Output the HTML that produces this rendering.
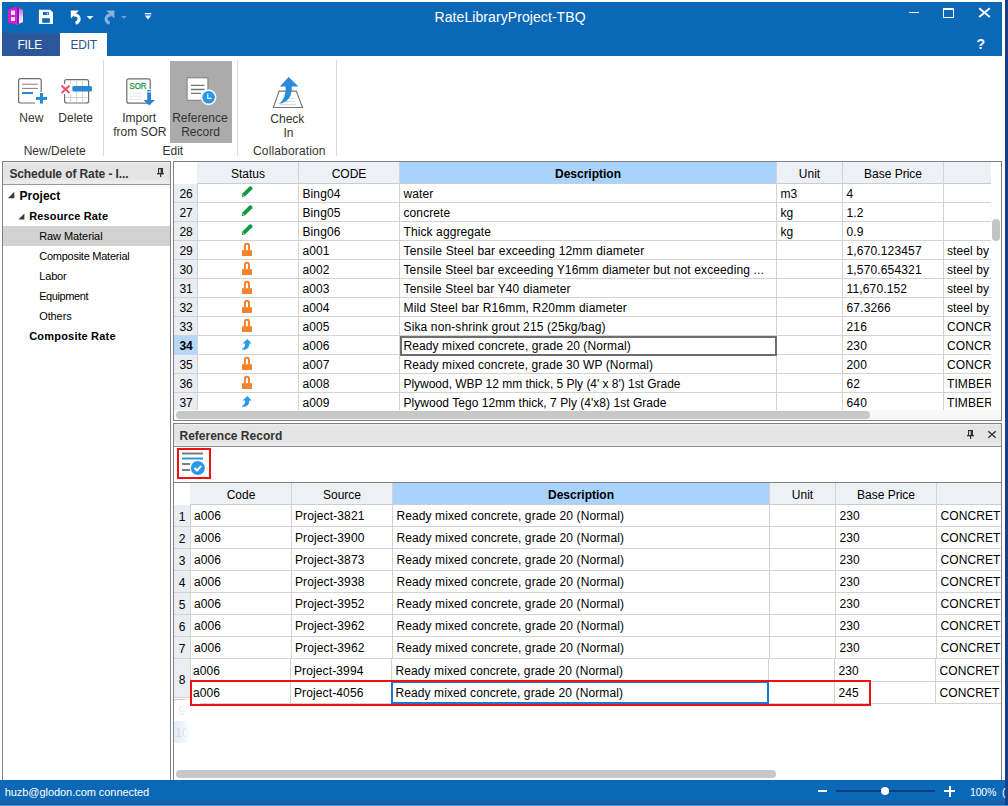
<!DOCTYPE html><html><head><meta charset="utf-8"><style>html,body{margin:0;padding:0;}body{width:1008px;height:806px;position:relative;overflow:hidden;background:#fff;font-family:"Liberation Sans", sans-serif;}div{box-sizing:border-box;}</style></head><body>
<div style="position:absolute;left:1005px;top:0px;width:3px;height:806px;background:#153f86;"></div>
<div style="position:absolute;left:2px;top:2px;width:1000px;height:54px;background:#0b68b6;"></div>
<div style="position:absolute;left:2px;top:33px;width:58px;height:23px;background:#2b579a;"></div>
<div style="position:absolute;left:17.4px;top:38.04px;font-size:12px;line-height:14px;font-weight:normal;color:#fff;letter-spacing:-0.15px;white-space:nowrap;">FILE</div>
<div style="position:absolute;left:60px;top:33px;width:47px;height:24px;background:#fff;"></div>
<div style="position:absolute;left:70.6px;top:38.04px;font-size:12px;line-height:14px;font-weight:normal;color:#2a5699;letter-spacing:-0.3px;white-space:nowrap;">EDIT</div>
<div style="position:absolute;left:434.5px;top:9.45px;font-size:14px;line-height:16px;font-weight:normal;color:#fff;letter-spacing:0.08px;white-space:nowrap;">RateLibraryProject-TBQ</div>
<div style="position:absolute;left:103px;top:60px;width:1px;height:96px;background:#dadada;"></div>
<div style="position:absolute;left:237px;top:60px;width:1px;height:96px;background:#dadada;"></div>
<div style="position:absolute;left:336px;top:60px;width:1px;height:96px;background:#dadada;"></div>
<div style="position:absolute;left:170px;top:61px;width:62px;height:82px;background:#ababab;"></div>
<div style="position:absolute;left:19.3px;top:110.64px;font-size:12px;line-height:14px;font-weight:normal;color:#333;letter-spacing:0px;white-space:nowrap;">New</div>
<div style="position:absolute;left:58.3px;top:110.64px;font-size:12px;line-height:14px;font-weight:normal;color:#333;letter-spacing:0px;white-space:nowrap;">Delete</div>
<div style="position:absolute;left:23.7px;top:143.84px;font-size:12px;line-height:14px;font-weight:normal;color:#333;letter-spacing:0px;white-space:nowrap;">New/Delete</div>
<div style="position:absolute;left:122.2px;top:110.84px;font-size:12px;line-height:14px;font-weight:normal;color:#333;letter-spacing:0px;white-space:nowrap;">Import</div>
<div style="position:absolute;left:113.2px;top:125.34px;font-size:12px;line-height:14px;font-weight:normal;color:#333;letter-spacing:0px;white-space:nowrap;">from SOR</div>
<div style="position:absolute;left:172.2px;top:110.84px;font-size:12px;line-height:14px;font-weight:normal;color:#333;letter-spacing:0px;white-space:nowrap;">Reference</div>
<div style="position:absolute;left:181.2px;top:125.34px;font-size:12px;line-height:14px;font-weight:normal;color:#333;letter-spacing:0px;white-space:nowrap;">Record</div>
<div style="position:absolute;left:162.5px;top:144.04px;font-size:12px;line-height:14px;font-weight:normal;color:#333;letter-spacing:0px;white-space:nowrap;">Edit</div>
<div style="position:absolute;left:270.3px;top:111.54px;font-size:12px;line-height:14px;font-weight:normal;color:#333;letter-spacing:0px;white-space:nowrap;">Check</div>
<div style="position:absolute;left:283.5px;top:126.04px;font-size:12px;line-height:14px;font-weight:normal;color:#333;letter-spacing:0px;white-space:nowrap;">In</div>
<div style="position:absolute;left:253px;top:143.74px;font-size:12px;line-height:14px;font-weight:normal;color:#333;letter-spacing:0.15px;white-space:nowrap;">Collaboration</div>
<div style="position:absolute;left:2px;top:161px;width:169px;height:619px;border:1px solid #808086;border-bottom:none;background:#fff;"></div>
<div style="position:absolute;left:3px;top:162px;width:167px;height:23px;background:linear-gradient(#efefef 0px,#e4e4e4 2px,#e4e4e4 17px,#ebebeb 19px,#ebebeb 22px);border-bottom:1px solid #9a9a9a;"></div>
<div style="position:absolute;left:9.4px;top:167.24px;font-size:12px;line-height:14px;font-weight:bold;color:#333;letter-spacing:-0.1px;white-space:nowrap;">Schedule of Rate - I...</div>
<div style="position:absolute;left:3px;top:226px;width:167px;height:20px;background:#d2d2d2;"></div>
<div style="position:absolute;left:19.6px;top:188.59px;font-size:12px;line-height:14px;font-weight:bold;color:#000;letter-spacing:0px;white-space:nowrap;">Project</div>
<div style="position:absolute;left:29.2px;top:209.89px;font-size:11px;line-height:13px;font-weight:bold;color:#000;letter-spacing:0.15px;white-space:nowrap;">Resource Rate</div>
<div style="position:absolute;left:39.2px;top:230.09px;font-size:11px;line-height:13px;font-weight:normal;color:#000;letter-spacing:-0.07px;white-space:nowrap;">Raw Material</div>
<div style="position:absolute;left:39.2px;top:249.79px;font-size:11px;line-height:13px;font-weight:normal;color:#000;letter-spacing:-0.25px;white-space:nowrap;">Composite Material</div>
<div style="position:absolute;left:39.2px;top:269.79px;font-size:11px;line-height:13px;font-weight:normal;color:#000;letter-spacing:-0.14px;white-space:nowrap;">Labor</div>
<div style="position:absolute;left:39.2px;top:289.59px;font-size:11px;line-height:13px;font-weight:normal;color:#000;letter-spacing:-0.4px;white-space:nowrap;">Equipment</div>
<div style="position:absolute;left:39.2px;top:309.79px;font-size:11px;line-height:13px;font-weight:normal;color:#000;letter-spacing:-0.1px;white-space:nowrap;">Others</div>
<div style="position:absolute;left:29.2px;top:329.69px;font-size:11px;line-height:13px;font-weight:bold;color:#000;letter-spacing:0.2px;white-space:nowrap;">Composite Rate</div>
<div style="position:absolute;left:173px;top:161px;width:829px;height:260px;border:1px solid #808086;background:#fff;"></div>
<div style="position:absolute;left:174px;top:162px;width:817px;height:22px;background:#edf1f6;"></div>
<div style="position:absolute;left:174px;top:162px;width:23px;height:22px;background:#fff;"></div>
<div style="position:absolute;left:400px;top:162px;width:376px;height:21px;background:#a9d3fd;"></div>
<div style="position:absolute;left:197px;top:183px;width:794px;height:1px;background:#c9ced6;"></div>
<div style="position:absolute;left:174px;top:184px;width:23px;height:227px;background:#eaeef3;"></div>
<div style="position:absolute;left:298px;top:162px;width:1px;height:249px;background:#d3d3d3;"></div>
<div style="position:absolute;left:399px;top:162px;width:1px;height:249px;background:#d3d3d3;"></div>
<div style="position:absolute;left:776px;top:162px;width:1px;height:249px;background:#d3d3d3;"></div>
<div style="position:absolute;left:842px;top:162px;width:1px;height:249px;background:#d3d3d3;"></div>
<div style="position:absolute;left:943px;top:162px;width:1px;height:249px;background:#d3d3d3;"></div>
<div style="position:absolute;left:197px;top:183px;width:1px;height:228px;background:#d3d3d3;"></div>
<div style="position:absolute;left:0px;top:-0.85px;font-size:1px;line-height:1px;font-weight:normal;color:#000;letter-spacing:0px;white-space:nowrap;"></div>
<div style="position:absolute;left:198px;width:100px;top:166.74px;font-size:12px;line-height:14px;text-align:center;font-weight:normal;color:#000;white-space:nowrap;">Status</div>
<div style="position:absolute;left:299px;width:100px;top:166.74px;font-size:12px;line-height:14px;text-align:center;font-weight:normal;color:#000;white-space:nowrap;">CODE</div>
<div style="position:absolute;left:400px;width:376px;top:166.74px;font-size:12px;line-height:14px;text-align:center;font-weight:bold;color:#000;white-space:nowrap;">Description</div>
<div style="position:absolute;left:777px;width:65px;top:166.74px;font-size:12px;line-height:14px;text-align:center;font-weight:normal;color:#000;white-space:nowrap;">Unit</div>
<div style="position:absolute;left:843px;width:100px;top:166.74px;font-size:12px;line-height:14px;text-align:center;font-weight:normal;color:#000;white-space:nowrap;">Base Price</div>
<div style="position:absolute;left:174px;top:202px;width:817px;height:1px;background:#d3d3d3;"></div>
<div style="position:absolute;left:174.6px;width:23.0px;top:186.54px;font-size:12px;line-height:14px;text-align:center;font-weight:normal;color:#000;white-space:nowrap;">26</div>
<div style="position:absolute;left:240px;top:184px;width:14px;height:14px;"><svg width="14" height="14" viewBox="0 0 14 14"><path d="M1.9 13 L2.15 9.85 L9.55 2.45 Q10.9 1.8 12.25 3.15 Q12.5 4 12.25 5.15 L4.85 12.55 Z" fill="#129a3e"/><path d="M2.7 10.6 L4.2 12.1" stroke="#e8f8ea" stroke-width="0.9"/></svg></div>
<div style="position:absolute;left:302.5px;top:186.54px;font-size:12px;line-height:14px;font-weight:normal;color:#000;letter-spacing:0.1px;white-space:nowrap;">Bing04</div>
<div style="position:absolute;left:403.5px;top:186.54px;font-size:12px;line-height:14px;font-weight:normal;color:#000;letter-spacing:0.1px;white-space:nowrap;">water</div>
<div style="position:absolute;left:780.5px;top:186.54px;font-size:12px;line-height:14px;font-weight:normal;color:#000;letter-spacing:0px;white-space:nowrap;">m3</div>
<div style="position:absolute;left:846.5px;top:186.54px;font-size:12px;line-height:14px;font-weight:normal;color:#000;letter-spacing:0.15px;white-space:nowrap;">4</div>
<div style="position:absolute;left:174px;top:221px;width:817px;height:1px;background:#d3d3d3;"></div>
<div style="position:absolute;left:174.6px;width:23.0px;top:205.54px;font-size:12px;line-height:14px;text-align:center;font-weight:normal;color:#000;white-space:nowrap;">27</div>
<div style="position:absolute;left:240px;top:203px;width:14px;height:14px;"><svg width="14" height="14" viewBox="0 0 14 14"><path d="M1.9 13 L2.15 9.85 L9.55 2.45 Q10.9 1.8 12.25 3.15 Q12.5 4 12.25 5.15 L4.85 12.55 Z" fill="#129a3e"/><path d="M2.7 10.6 L4.2 12.1" stroke="#e8f8ea" stroke-width="0.9"/></svg></div>
<div style="position:absolute;left:302.5px;top:205.54px;font-size:12px;line-height:14px;font-weight:normal;color:#000;letter-spacing:0.1px;white-space:nowrap;">Bing05</div>
<div style="position:absolute;left:403.5px;top:205.54px;font-size:12px;line-height:14px;font-weight:normal;color:#000;letter-spacing:0.1px;white-space:nowrap;">concrete</div>
<div style="position:absolute;left:780.5px;top:205.54px;font-size:12px;line-height:14px;font-weight:normal;color:#000;letter-spacing:0px;white-space:nowrap;">kg</div>
<div style="position:absolute;left:846.5px;top:205.54px;font-size:12px;line-height:14px;font-weight:normal;color:#000;letter-spacing:0.15px;white-space:nowrap;">1.2</div>
<div style="position:absolute;left:174px;top:240px;width:817px;height:1px;background:#d3d3d3;"></div>
<div style="position:absolute;left:174.6px;width:23.0px;top:224.54px;font-size:12px;line-height:14px;text-align:center;font-weight:normal;color:#000;white-space:nowrap;">28</div>
<div style="position:absolute;left:240px;top:222px;width:14px;height:14px;"><svg width="14" height="14" viewBox="0 0 14 14"><path d="M1.9 13 L2.15 9.85 L9.55 2.45 Q10.9 1.8 12.25 3.15 Q12.5 4 12.25 5.15 L4.85 12.55 Z" fill="#129a3e"/><path d="M2.7 10.6 L4.2 12.1" stroke="#e8f8ea" stroke-width="0.9"/></svg></div>
<div style="position:absolute;left:302.5px;top:224.54px;font-size:12px;line-height:14px;font-weight:normal;color:#000;letter-spacing:0.1px;white-space:nowrap;">Bing06</div>
<div style="position:absolute;left:403.5px;top:224.54px;font-size:12px;line-height:14px;font-weight:normal;color:#000;letter-spacing:0.1px;white-space:nowrap;">Thick aggregate</div>
<div style="position:absolute;left:780.5px;top:224.54px;font-size:12px;line-height:14px;font-weight:normal;color:#000;letter-spacing:0px;white-space:nowrap;">kg</div>
<div style="position:absolute;left:846.5px;top:224.54px;font-size:12px;line-height:14px;font-weight:normal;color:#000;letter-spacing:0.15px;white-space:nowrap;">0.9</div>
<div style="position:absolute;left:174px;top:259px;width:817px;height:1px;background:#d3d3d3;"></div>
<div style="position:absolute;left:174.6px;width:23.0px;top:243.54px;font-size:12px;line-height:14px;text-align:center;font-weight:normal;color:#000;white-space:nowrap;">29</div>
<div style="position:absolute;left:240px;top:242px;width:14px;height:14px;"><svg width="14" height="14" viewBox="0 0 14 14"><path d="M4.9 8.5 V3.8 A2.05 2.05 0 0 1 9 3.8 V8.5" fill="none" stroke="#f5832c" stroke-width="2"/><rect x="2" y="8.2" width="10" height="5.8" fill="#f5832c"/></svg></div>
<div style="position:absolute;left:302.5px;top:243.54px;font-size:12px;line-height:14px;font-weight:normal;color:#000;letter-spacing:0.1px;white-space:nowrap;">a001</div>
<div style="position:absolute;left:403.5px;top:243.54px;font-size:12px;line-height:14px;font-weight:normal;color:#000;letter-spacing:0.18px;white-space:nowrap;">Tensile Steel bar exceeding 12mm diameter</div>
<div style="position:absolute;left:846.5px;top:243.54px;font-size:12px;line-height:14px;font-weight:normal;color:#000;letter-spacing:0.15px;white-space:nowrap;">1,670.123457</div>
<div style="position:absolute;left:947px;top:243.54px;font-size:12px;line-height:14px;font-weight:normal;color:#000;letter-spacing:0.1px;white-space:nowrap;">steel by</div>
<div style="position:absolute;left:174px;top:278px;width:817px;height:1px;background:#d3d3d3;"></div>
<div style="position:absolute;left:174.6px;width:23.0px;top:262.54px;font-size:12px;line-height:14px;text-align:center;font-weight:normal;color:#000;white-space:nowrap;">30</div>
<div style="position:absolute;left:240px;top:261px;width:14px;height:14px;"><svg width="14" height="14" viewBox="0 0 14 14"><path d="M4.9 8.5 V3.8 A2.05 2.05 0 0 1 9 3.8 V8.5" fill="none" stroke="#f5832c" stroke-width="2"/><rect x="2" y="8.2" width="10" height="5.8" fill="#f5832c"/></svg></div>
<div style="position:absolute;left:302.5px;top:262.54px;font-size:12px;line-height:14px;font-weight:normal;color:#000;letter-spacing:0.1px;white-space:nowrap;">a002</div>
<div style="position:absolute;left:403.5px;top:262.54px;font-size:12px;line-height:14px;font-weight:normal;color:#000;letter-spacing:0.12px;white-space:nowrap;">Tensile Steel bar exceeding Y16mm diameter but not exceeding ...</div>
<div style="position:absolute;left:846.5px;top:262.54px;font-size:12px;line-height:14px;font-weight:normal;color:#000;letter-spacing:0.15px;white-space:nowrap;">1,570.654321</div>
<div style="position:absolute;left:947px;top:262.54px;font-size:12px;line-height:14px;font-weight:normal;color:#000;letter-spacing:0.1px;white-space:nowrap;">steel by</div>
<div style="position:absolute;left:174px;top:297px;width:817px;height:1px;background:#d3d3d3;"></div>
<div style="position:absolute;left:174.6px;width:23.0px;top:281.54px;font-size:12px;line-height:14px;text-align:center;font-weight:normal;color:#000;white-space:nowrap;">31</div>
<div style="position:absolute;left:240px;top:280px;width:14px;height:14px;"><svg width="14" height="14" viewBox="0 0 14 14"><path d="M4.9 8.5 V3.8 A2.05 2.05 0 0 1 9 3.8 V8.5" fill="none" stroke="#f5832c" stroke-width="2"/><rect x="2" y="8.2" width="10" height="5.8" fill="#f5832c"/></svg></div>
<div style="position:absolute;left:302.5px;top:281.54px;font-size:12px;line-height:14px;font-weight:normal;color:#000;letter-spacing:0.1px;white-space:nowrap;">a003</div>
<div style="position:absolute;left:403.5px;top:281.54px;font-size:12px;line-height:14px;font-weight:normal;color:#000;letter-spacing:0.13px;white-space:nowrap;">Tensile Steel bar Y40 diameter</div>
<div style="position:absolute;left:846.5px;top:281.54px;font-size:12px;line-height:14px;font-weight:normal;color:#000;letter-spacing:0.15px;white-space:nowrap;">11,670.152</div>
<div style="position:absolute;left:947px;top:281.54px;font-size:12px;line-height:14px;font-weight:normal;color:#000;letter-spacing:0.1px;white-space:nowrap;">steel by</div>
<div style="position:absolute;left:174px;top:316px;width:817px;height:1px;background:#d3d3d3;"></div>
<div style="position:absolute;left:174.6px;width:23.0px;top:300.54px;font-size:12px;line-height:14px;text-align:center;font-weight:normal;color:#000;white-space:nowrap;">32</div>
<div style="position:absolute;left:240px;top:299px;width:14px;height:14px;"><svg width="14" height="14" viewBox="0 0 14 14"><path d="M4.9 8.5 V3.8 A2.05 2.05 0 0 1 9 3.8 V8.5" fill="none" stroke="#f5832c" stroke-width="2"/><rect x="2" y="8.2" width="10" height="5.8" fill="#f5832c"/></svg></div>
<div style="position:absolute;left:302.5px;top:300.54px;font-size:12px;line-height:14px;font-weight:normal;color:#000;letter-spacing:0.1px;white-space:nowrap;">a004</div>
<div style="position:absolute;left:403.5px;top:300.54px;font-size:12px;line-height:14px;font-weight:normal;color:#000;letter-spacing:0.17px;white-space:nowrap;">Mild Steel bar R16mm, R20mm diameter</div>
<div style="position:absolute;left:846.5px;top:300.54px;font-size:12px;line-height:14px;font-weight:normal;color:#000;letter-spacing:0.15px;white-space:nowrap;">67.3266</div>
<div style="position:absolute;left:947px;top:300.54px;font-size:12px;line-height:14px;font-weight:normal;color:#000;letter-spacing:0.1px;white-space:nowrap;">steel by</div>
<div style="position:absolute;left:174px;top:335px;width:817px;height:1px;background:#d3d3d3;"></div>
<div style="position:absolute;left:174.6px;width:23.0px;top:319.54px;font-size:12px;line-height:14px;text-align:center;font-weight:normal;color:#000;white-space:nowrap;">33</div>
<div style="position:absolute;left:240px;top:318px;width:14px;height:14px;"><svg width="14" height="14" viewBox="0 0 14 14"><path d="M4.9 8.5 V3.8 A2.05 2.05 0 0 1 9 3.8 V8.5" fill="none" stroke="#f5832c" stroke-width="2"/><rect x="2" y="8.2" width="10" height="5.8" fill="#f5832c"/></svg></div>
<div style="position:absolute;left:302.5px;top:319.54px;font-size:12px;line-height:14px;font-weight:normal;color:#000;letter-spacing:0.1px;white-space:nowrap;">a005</div>
<div style="position:absolute;left:403.5px;top:319.54px;font-size:12px;line-height:14px;font-weight:normal;color:#000;letter-spacing:0.13px;white-space:nowrap;">Sika non-shrink grout 215 (25kg/bag)</div>
<div style="position:absolute;left:846.5px;top:319.54px;font-size:12px;line-height:14px;font-weight:normal;color:#000;letter-spacing:0.15px;white-space:nowrap;">216</div>
<div style="position:absolute;left:947px;top:319.54px;font-size:12px;line-height:14px;font-weight:normal;color:#000;letter-spacing:0.1px;white-space:nowrap;">CONCR</div>
<div style="position:absolute;left:174px;top:354px;width:817px;height:1px;background:#d3d3d3;"></div>
<div style="position:absolute;left:174px;top:336px;width:23px;height:19px;background:#b7d7f7;"></div>
<div style="position:absolute;left:174.6px;width:23.0px;top:338.54px;font-size:12px;line-height:14px;text-align:center;font-weight:bold;color:#000;white-space:nowrap;">34</div>
<div style="position:absolute;left:240px;top:338px;width:14px;height:14px;"><svg width="14" height="14" viewBox="0 0 14 14"><path d="M7.4 0.9 L11.6 5.6 L9.3 5.6 C9.5 9.6 7.2 11.9 2.4 11.9 L2.5 10.6 C4.6 9.6 5.2 8 5.1 5.6 L2.4 5.6 Z" fill="#2a9be8"/></svg></div>
<div style="position:absolute;left:302.5px;top:338.54px;font-size:12px;line-height:14px;font-weight:normal;color:#000;letter-spacing:0.1px;white-space:nowrap;">a006</div>
<div style="position:absolute;left:403.5px;top:338.54px;font-size:12px;line-height:14px;font-weight:normal;color:#000;letter-spacing:0.1px;white-space:nowrap;">Ready mixed concrete, grade 20 (Normal)</div>
<div style="position:absolute;left:846.5px;top:338.54px;font-size:12px;line-height:14px;font-weight:normal;color:#000;letter-spacing:0.15px;white-space:nowrap;">230</div>
<div style="position:absolute;left:947px;top:338.54px;font-size:12px;line-height:14px;font-weight:normal;color:#000;letter-spacing:0.1px;white-space:nowrap;">CONCR</div>
<div style="position:absolute;left:400px;top:336px;width:377px;height:20px;border:2px solid #6e6e6e;"></div>
<div style="position:absolute;left:174px;top:373px;width:817px;height:1px;background:#d3d3d3;"></div>
<div style="position:absolute;left:174.6px;width:23.0px;top:357.54px;font-size:12px;line-height:14px;text-align:center;font-weight:normal;color:#000;white-space:nowrap;">35</div>
<div style="position:absolute;left:240px;top:356px;width:14px;height:14px;"><svg width="14" height="14" viewBox="0 0 14 14"><path d="M4.9 8.5 V3.8 A2.05 2.05 0 0 1 9 3.8 V8.5" fill="none" stroke="#f5832c" stroke-width="2"/><rect x="2" y="8.2" width="10" height="5.8" fill="#f5832c"/></svg></div>
<div style="position:absolute;left:302.5px;top:357.54px;font-size:12px;line-height:14px;font-weight:normal;color:#000;letter-spacing:0.1px;white-space:nowrap;">a007</div>
<div style="position:absolute;left:403.5px;top:357.54px;font-size:12px;line-height:14px;font-weight:normal;color:#000;letter-spacing:0.09px;white-space:nowrap;">Ready mixed concrete, grade 30 WP (Normal)</div>
<div style="position:absolute;left:846.5px;top:357.54px;font-size:12px;line-height:14px;font-weight:normal;color:#000;letter-spacing:0.15px;white-space:nowrap;">200</div>
<div style="position:absolute;left:947px;top:357.54px;font-size:12px;line-height:14px;font-weight:normal;color:#000;letter-spacing:0.1px;white-space:nowrap;">CONCR</div>
<div style="position:absolute;left:174px;top:392px;width:817px;height:1px;background:#d3d3d3;"></div>
<div style="position:absolute;left:174.6px;width:23.0px;top:376.54px;font-size:12px;line-height:14px;text-align:center;font-weight:normal;color:#000;white-space:nowrap;">36</div>
<div style="position:absolute;left:240px;top:375px;width:14px;height:14px;"><svg width="14" height="14" viewBox="0 0 14 14"><path d="M4.9 8.5 V3.8 A2.05 2.05 0 0 1 9 3.8 V8.5" fill="none" stroke="#f5832c" stroke-width="2"/><rect x="2" y="8.2" width="10" height="5.8" fill="#f5832c"/></svg></div>
<div style="position:absolute;left:302.5px;top:376.54px;font-size:12px;line-height:14px;font-weight:normal;color:#000;letter-spacing:0.1px;white-space:nowrap;">a008</div>
<div style="position:absolute;left:403.5px;top:376.54px;font-size:12px;line-height:14px;font-weight:normal;color:#000;letter-spacing:-0.03px;white-space:nowrap;">Plywood, WBP 12 mm thick, 5 Ply (4' x 8') 1st Grade</div>
<div style="position:absolute;left:846.5px;top:376.54px;font-size:12px;line-height:14px;font-weight:normal;color:#000;letter-spacing:0.15px;white-space:nowrap;">62</div>
<div style="position:absolute;left:947px;top:376.54px;font-size:12px;line-height:14px;font-weight:normal;color:#000;letter-spacing:0.1px;white-space:nowrap;">TIMBER</div>
<div style="position:absolute;left:174.6px;width:23.0px;top:395.54px;font-size:12px;line-height:14px;text-align:center;font-weight:normal;color:#000;white-space:nowrap;">37</div>
<div style="position:absolute;left:240px;top:395px;width:14px;height:14px;"><svg width="14" height="14" viewBox="0 0 14 14"><path d="M7.4 0.9 L11.6 5.6 L9.3 5.6 C9.5 9.6 7.2 11.9 2.4 11.9 L2.5 10.6 C4.6 9.6 5.2 8 5.1 5.6 L2.4 5.6 Z" fill="#2a9be8"/></svg></div>
<div style="position:absolute;left:302.5px;top:395.54px;font-size:12px;line-height:14px;font-weight:normal;color:#000;letter-spacing:0.1px;white-space:nowrap;">a009</div>
<div style="position:absolute;left:403.5px;top:395.54px;font-size:12px;line-height:14px;font-weight:normal;color:#000;letter-spacing:0.03px;white-space:nowrap;">Plywood Tego 12mm thick, 7 Ply (4'x8) 1st Grade</div>
<div style="position:absolute;left:846.5px;top:395.54px;font-size:12px;line-height:14px;font-weight:normal;color:#000;letter-spacing:0.15px;white-space:nowrap;">640</div>
<div style="position:absolute;left:947px;top:395.54px;font-size:12px;line-height:14px;font-weight:normal;color:#000;letter-spacing:0.1px;white-space:nowrap;">TIMBER</div>
<div style="position:absolute;left:991px;top:162px;width:10px;height:249px;background:#fff;"></div>
<div style="position:absolute;left:992px;top:219px;width:8px;height:22px;background:#c4c4c4;border-radius:4px;"></div>
<div style="position:absolute;left:174px;top:410px;width:827px;height:10px;background:#f8f8f8;"></div>
<div style="position:absolute;left:176px;top:411px;width:694px;height:8px;background:#c8c8c8;border-radius:4px;"></div>
<div style="position:absolute;left:173px;top:423px;width:829px;height:357px;border:1px solid #808086;border-bottom:none;background:#fff;"></div>
<div style="position:absolute;left:174px;top:424px;width:827px;height:23px;background:linear-gradient(#efefef 0px,#e4e4e4 2px,#e4e4e4 17px,#ebebeb 19px,#ebebeb 22px);border-bottom:1px solid #8f8f8f;"></div>
<div style="position:absolute;left:179.5px;top:429.04px;font-size:12px;line-height:14px;font-weight:bold;color:#333;letter-spacing:0px;white-space:nowrap;">Reference Record</div>
<div style="position:absolute;left:177px;top:448px;width:34px;height:31px;border:2px solid #f0100f;"></div>
<svg style="position:absolute;left:180px;top:450px" width="28" height="28" viewBox="0 0 28 28"><rect x="2" y="2.5" width="21" height="2" fill="#7d7d7d"/><rect x="2" y="7.5" width="21" height="2" fill="#2b98e6"/><rect x="2" y="13" width="8" height="2" fill="#7d7d7d"/><rect x="2" y="19" width="8" height="2" fill="#7d7d7d"/><circle cx="17.8" cy="18" r="7" fill="#2b98e6"/><path d="M14.5 18 L17 20.5 L21.2 15.8" fill="none" stroke="#fff" stroke-width="2"/></svg>
<div style="position:absolute;left:174px;top:482px;width:827px;height:1px;background:#808086;"></div>
<div style="position:absolute;left:174px;top:483px;width:827px;height:21px;background:#edf1f6;"></div>
<div style="position:absolute;left:174px;top:483px;width:16px;height:21px;background:#fff;"></div>
<div style="position:absolute;left:393px;top:483px;width:376px;height:21px;background:#a9d3fd;"></div>
<div style="position:absolute;left:190px;top:504px;width:811px;height:1px;background:#c9ced6;"></div>
<div style="position:absolute;left:191px;width:100px;top:488.14px;font-size:12px;line-height:14px;text-align:center;font-weight:normal;color:#000;white-space:nowrap;">Code</div>
<div style="position:absolute;left:292px;width:100px;top:488.14px;font-size:12px;line-height:14px;text-align:center;font-weight:normal;color:#000;white-space:nowrap;">Source</div>
<div style="position:absolute;left:393px;width:376px;top:488.14px;font-size:12px;line-height:14px;text-align:center;font-weight:bold;color:#000;white-space:nowrap;">Description</div>
<div style="position:absolute;left:770px;width:65px;top:488.14px;font-size:12px;line-height:14px;text-align:center;font-weight:normal;color:#000;white-space:nowrap;">Unit</div>
<div style="position:absolute;left:836px;width:100px;top:488.14px;font-size:12px;line-height:14px;text-align:center;font-weight:normal;color:#000;white-space:nowrap;">Base Price</div>
<div style="position:absolute;left:174px;top:505px;width:16px;height:192px;background:#eaeef3;"></div>
<div style="position:absolute;left:291px;top:483px;width:1px;height:176px;background:#d3d3d3;"></div>
<div style="position:absolute;left:392px;top:483px;width:1px;height:176px;background:#d3d3d3;"></div>
<div style="position:absolute;left:769px;top:483px;width:1px;height:176px;background:#d3d3d3;"></div>
<div style="position:absolute;left:835px;top:483px;width:1px;height:176px;background:#d3d3d3;"></div>
<div style="position:absolute;left:936px;top:483px;width:1px;height:176px;background:#d3d3d3;"></div>
<div style="position:absolute;left:190px;top:504px;width:1px;height:155px;background:#d3d3d3;"></div>
<div style="position:absolute;left:174px;top:526px;width:827px;height:1px;background:#d3d3d3;"></div>
<div style="position:absolute;left:174px;width:16px;top:509.84px;font-size:12px;line-height:14px;text-align:center;font-weight:normal;color:#000;white-space:nowrap;">1</div>
<div style="position:absolute;left:194px;top:508.84px;font-size:12px;line-height:14px;font-weight:normal;color:#000;letter-spacing:0.1px;white-space:nowrap;">a006</div>
<div style="position:absolute;left:295px;top:508.84px;font-size:12px;line-height:14px;font-weight:normal;color:#000;letter-spacing:0.12px;white-space:nowrap;">Project-3821</div>
<div style="position:absolute;left:396.4px;top:508.84px;font-size:12px;line-height:14px;font-weight:normal;color:#000;letter-spacing:0.11px;white-space:nowrap;">Ready mixed concrete, grade 20 (Normal)</div>
<div style="position:absolute;left:839.5px;top:508.84px;font-size:12px;line-height:14px;font-weight:normal;color:#000;letter-spacing:0.1px;white-space:nowrap;">230</div>
<div style="position:absolute;left:940.5px;top:508.84px;font-size:12px;line-height:14px;font-weight:normal;color:#000;letter-spacing:0.1px;white-space:nowrap;">CONCRET</div>
<div style="position:absolute;left:174px;top:548px;width:827px;height:1px;background:#d3d3d3;"></div>
<div style="position:absolute;left:174px;width:16px;top:531.84px;font-size:12px;line-height:14px;text-align:center;font-weight:normal;color:#000;white-space:nowrap;">2</div>
<div style="position:absolute;left:194px;top:530.84px;font-size:12px;line-height:14px;font-weight:normal;color:#000;letter-spacing:0.1px;white-space:nowrap;">a006</div>
<div style="position:absolute;left:295px;top:530.84px;font-size:12px;line-height:14px;font-weight:normal;color:#000;letter-spacing:0.12px;white-space:nowrap;">Project-3900</div>
<div style="position:absolute;left:396.4px;top:530.84px;font-size:12px;line-height:14px;font-weight:normal;color:#000;letter-spacing:0.11px;white-space:nowrap;">Ready mixed concrete, grade 20 (Normal)</div>
<div style="position:absolute;left:839.5px;top:530.84px;font-size:12px;line-height:14px;font-weight:normal;color:#000;letter-spacing:0.1px;white-space:nowrap;">230</div>
<div style="position:absolute;left:940.5px;top:530.84px;font-size:12px;line-height:14px;font-weight:normal;color:#000;letter-spacing:0.1px;white-space:nowrap;">CONCRET</div>
<div style="position:absolute;left:174px;top:570px;width:827px;height:1px;background:#d3d3d3;"></div>
<div style="position:absolute;left:174px;width:16px;top:553.84px;font-size:12px;line-height:14px;text-align:center;font-weight:normal;color:#000;white-space:nowrap;">3</div>
<div style="position:absolute;left:194px;top:552.84px;font-size:12px;line-height:14px;font-weight:normal;color:#000;letter-spacing:0.1px;white-space:nowrap;">a006</div>
<div style="position:absolute;left:295px;top:552.84px;font-size:12px;line-height:14px;font-weight:normal;color:#000;letter-spacing:0.12px;white-space:nowrap;">Project-3873</div>
<div style="position:absolute;left:396.4px;top:552.84px;font-size:12px;line-height:14px;font-weight:normal;color:#000;letter-spacing:0.11px;white-space:nowrap;">Ready mixed concrete, grade 20 (Normal)</div>
<div style="position:absolute;left:839.5px;top:552.84px;font-size:12px;line-height:14px;font-weight:normal;color:#000;letter-spacing:0.1px;white-space:nowrap;">230</div>
<div style="position:absolute;left:940.5px;top:552.84px;font-size:12px;line-height:14px;font-weight:normal;color:#000;letter-spacing:0.1px;white-space:nowrap;">CONCRET</div>
<div style="position:absolute;left:174px;top:592px;width:827px;height:1px;background:#d3d3d3;"></div>
<div style="position:absolute;left:174px;width:16px;top:575.84px;font-size:12px;line-height:14px;text-align:center;font-weight:normal;color:#000;white-space:nowrap;">4</div>
<div style="position:absolute;left:194px;top:574.84px;font-size:12px;line-height:14px;font-weight:normal;color:#000;letter-spacing:0.1px;white-space:nowrap;">a006</div>
<div style="position:absolute;left:295px;top:574.84px;font-size:12px;line-height:14px;font-weight:normal;color:#000;letter-spacing:0.12px;white-space:nowrap;">Project-3938</div>
<div style="position:absolute;left:396.4px;top:574.84px;font-size:12px;line-height:14px;font-weight:normal;color:#000;letter-spacing:0.11px;white-space:nowrap;">Ready mixed concrete, grade 20 (Normal)</div>
<div style="position:absolute;left:839.5px;top:574.84px;font-size:12px;line-height:14px;font-weight:normal;color:#000;letter-spacing:0.1px;white-space:nowrap;">230</div>
<div style="position:absolute;left:940.5px;top:574.84px;font-size:12px;line-height:14px;font-weight:normal;color:#000;letter-spacing:0.1px;white-space:nowrap;">CONCRET</div>
<div style="position:absolute;left:174px;top:614px;width:827px;height:1px;background:#d3d3d3;"></div>
<div style="position:absolute;left:174px;width:16px;top:597.84px;font-size:12px;line-height:14px;text-align:center;font-weight:normal;color:#000;white-space:nowrap;">5</div>
<div style="position:absolute;left:194px;top:596.84px;font-size:12px;line-height:14px;font-weight:normal;color:#000;letter-spacing:0.1px;white-space:nowrap;">a006</div>
<div style="position:absolute;left:295px;top:596.84px;font-size:12px;line-height:14px;font-weight:normal;color:#000;letter-spacing:0.12px;white-space:nowrap;">Project-3952</div>
<div style="position:absolute;left:396.4px;top:596.84px;font-size:12px;line-height:14px;font-weight:normal;color:#000;letter-spacing:0.11px;white-space:nowrap;">Ready mixed concrete, grade 20 (Normal)</div>
<div style="position:absolute;left:839.5px;top:596.84px;font-size:12px;line-height:14px;font-weight:normal;color:#000;letter-spacing:0.1px;white-space:nowrap;">230</div>
<div style="position:absolute;left:940.5px;top:596.84px;font-size:12px;line-height:14px;font-weight:normal;color:#000;letter-spacing:0.1px;white-space:nowrap;">CONCRET</div>
<div style="position:absolute;left:174px;top:636px;width:827px;height:1px;background:#d3d3d3;"></div>
<div style="position:absolute;left:174px;width:16px;top:619.84px;font-size:12px;line-height:14px;text-align:center;font-weight:normal;color:#000;white-space:nowrap;">6</div>
<div style="position:absolute;left:194px;top:618.84px;font-size:12px;line-height:14px;font-weight:normal;color:#000;letter-spacing:0.1px;white-space:nowrap;">a006</div>
<div style="position:absolute;left:295px;top:618.84px;font-size:12px;line-height:14px;font-weight:normal;color:#000;letter-spacing:0.12px;white-space:nowrap;">Project-3962</div>
<div style="position:absolute;left:396.4px;top:618.84px;font-size:12px;line-height:14px;font-weight:normal;color:#000;letter-spacing:0.11px;white-space:nowrap;">Ready mixed concrete, grade 20 (Normal)</div>
<div style="position:absolute;left:839.5px;top:618.84px;font-size:12px;line-height:14px;font-weight:normal;color:#000;letter-spacing:0.1px;white-space:nowrap;">230</div>
<div style="position:absolute;left:940.5px;top:618.84px;font-size:12px;line-height:14px;font-weight:normal;color:#000;letter-spacing:0.1px;white-space:nowrap;">CONCRET</div>
<div style="position:absolute;left:174px;top:658px;width:827px;height:1px;background:#d3d3d3;"></div>
<div style="position:absolute;left:174px;width:16px;top:641.84px;font-size:12px;line-height:14px;text-align:center;font-weight:normal;color:#000;white-space:nowrap;">7</div>
<div style="position:absolute;left:194px;top:640.84px;font-size:12px;line-height:14px;font-weight:normal;color:#000;letter-spacing:0.1px;white-space:nowrap;">a006</div>
<div style="position:absolute;left:295px;top:640.84px;font-size:12px;line-height:14px;font-weight:normal;color:#000;letter-spacing:0.12px;white-space:nowrap;">Project-3962</div>
<div style="position:absolute;left:396.4px;top:640.84px;font-size:12px;line-height:14px;font-weight:normal;color:#000;letter-spacing:0.11px;white-space:nowrap;">Ready mixed concrete, grade 20 (Normal)</div>
<div style="position:absolute;left:839.5px;top:640.84px;font-size:12px;line-height:14px;font-weight:normal;color:#000;letter-spacing:0.1px;white-space:nowrap;">230</div>
<div style="position:absolute;left:940.5px;top:640.84px;font-size:12px;line-height:14px;font-weight:normal;color:#000;letter-spacing:0.1px;white-space:nowrap;">CONCRET</div>
<div style="position:absolute;left:190px;top:659px;width:1px;height:45px;background:#d3d3d3;"></div>
<div style="position:absolute;left:290px;top:659px;width:1px;height:45px;background:#d3d3d3;"></div>
<div style="position:absolute;left:391px;top:659px;width:1px;height:45px;background:#d3d3d3;"></div>
<div style="position:absolute;left:768px;top:659px;width:1px;height:45px;background:#d3d3d3;"></div>
<div style="position:absolute;left:834px;top:659px;width:1px;height:45px;background:#d3d3d3;"></div>
<div style="position:absolute;left:935px;top:659px;width:1px;height:45px;background:#d3d3d3;"></div>
<div style="position:absolute;left:190px;top:681px;width:811px;height:1px;background:#d3d3d3;"></div>
<div style="position:absolute;left:190px;top:703px;width:811px;height:1px;background:#d3d3d3;"></div>
<div style="position:absolute;left:174px;width:16px;top:672.84px;font-size:12px;line-height:14px;text-align:center;font-weight:normal;color:#000;white-space:nowrap;">8</div>
<div style="position:absolute;left:193px;top:664.14px;font-size:12px;line-height:14px;font-weight:normal;color:#000;letter-spacing:0.1px;white-space:nowrap;">a006</div>
<div style="position:absolute;left:294px;top:664.14px;font-size:12px;line-height:14px;font-weight:normal;color:#000;letter-spacing:0.12px;white-space:nowrap;">Project-3994</div>
<div style="position:absolute;left:395.4px;top:664.14px;font-size:12px;line-height:14px;font-weight:normal;color:#000;letter-spacing:0.11px;white-space:nowrap;">Ready mixed concrete, grade 20 (Normal)</div>
<div style="position:absolute;left:838.5px;top:664.14px;font-size:12px;line-height:14px;font-weight:normal;color:#000;letter-spacing:0.1px;white-space:nowrap;">230</div>
<div style="position:absolute;left:939.5px;top:664.14px;font-size:12px;line-height:14px;font-weight:normal;color:#000;letter-spacing:0.1px;white-space:nowrap;">CONCRET</div>
<div style="position:absolute;left:193px;top:685.74px;font-size:12px;line-height:14px;font-weight:normal;color:#000;letter-spacing:0.1px;white-space:nowrap;">a006</div>
<div style="position:absolute;left:294px;top:685.74px;font-size:12px;line-height:14px;font-weight:normal;color:#000;letter-spacing:0.12px;white-space:nowrap;">Project-4056</div>
<div style="position:absolute;left:395.4px;top:685.74px;font-size:12px;line-height:14px;font-weight:normal;color:#000;letter-spacing:0.11px;white-space:nowrap;">Ready mixed concrete, grade 20 (Normal)</div>
<div style="position:absolute;left:838.5px;top:685.74px;font-size:12px;line-height:14px;font-weight:normal;color:#000;letter-spacing:0.1px;white-space:nowrap;">245</div>
<div style="position:absolute;left:939.5px;top:685.74px;font-size:12px;line-height:14px;font-weight:normal;color:#000;letter-spacing:0.1px;white-space:nowrap;">CONCRET</div>
<div style="position:absolute;left:174px;top:697px;width:16px;height:1px;background:#f3c8c8;"></div>
<div style="position:absolute;left:174px;top:699px;width:16px;height:1px;background:#c9c9c9;"></div>
<div style="position:absolute;left:174px;top:721px;width:30px;height:22px;background:linear-gradient(90deg,#e2eefa,#f4f9fd 50%,rgba(255,255,255,0));"></div>
<div style="position:absolute;left:174px;width:16px;top:703.84px;font-size:12px;line-height:14px;text-align:center;font-weight:normal;color:#f0eaea;white-space:nowrap;">9</div>
<div style="position:absolute;left:174px;width:16px;top:725.84px;font-size:12px;line-height:14px;text-align:center;font-weight:normal;color:#d8d8d8;white-space:nowrap;">10</div>
<div style="position:absolute;left:182px;top:699px;width:18px;height:44px;background:linear-gradient(90deg,rgba(255,255,255,0),rgba(255,255,255,0.85) 40%,#fff);"></div>
<div style="position:absolute;left:391px;top:681px;width:378px;height:23px;border:2px solid #1a78d0;"></div>
<div style="position:absolute;left:190px;top:680px;width:681px;height:26px;border:2px solid #f0100f;"></div>
<div style="position:absolute;left:1001px;top:483px;width:1px;height:297px;background:#808086;"></div>
<div style="position:absolute;left:176px;top:770px;width:600px;height:8px;background:#c8c8c8;border-radius:4px;"></div>
<svg style="position:absolute;left:6px;top:5px;overflow:visible" width="20" height="22" viewBox="6 5 20 22"><defs><linearGradient id="lg1" x1="0" y1="0" x2="0" y2="1"><stop offset="0" stop-color="#b040d8"/><stop offset="0.55" stop-color="#f0c8f8"/><stop offset="1" stop-color="#ffffff"/></linearGradient></defs><path d="M7.9 9.4 L16.8 6.4 L16.8 24.8 L7.9 22.5 Z" fill="#d21fd0"/><path d="M16.8 6.4 L23 10 L23 21.9 L16.8 24.8 Z" fill="url(#lg1)"/><path d="M16.8 6.4 L19 7.6 L19 24 L16.8 24.8 Z" fill="#9a10b8"/><rect x="11" y="10.5" width="4" height="4.5" fill="#f4e6f8"/><rect x="11" y="17.1" width="4" height="3.9" fill="#f4e6f8"/></svg>
<svg style="position:absolute;left:38px;top:9px;overflow:visible" width="16" height="16" viewBox="38 9 16 16"><path d="M38.9 9.8 L50.1 9.8 L53 12.6 L53 24 L38.9 24 Z" fill="#fff"/><rect x="43" y="12" width="5.9" height="2.9" fill="#0b68b6"/><rect x="46.8" y="12.8" width="1.3" height="1.3" fill="#fff"/><rect x="42.2" y="18.2" width="7.6" height="4.6" fill="#0b68b6"/></svg>
<svg style="position:absolute;left:68px;top:9px;overflow:visible" width="28" height="16" viewBox="68 9 28 16"><path d="M70.8 10.4 L79 10.4 L70.8 18.6 Z" fill="#fff"/><path d="M73.8 15.2 C79.6 13.8 81.2 21.2 75.6 23.2" fill="none" stroke="#fff" stroke-width="3.1"/><path d="M86.6 16.1 L93.4 16.1 L90 19.4 Z" fill="#fff"/></svg>
<svg style="position:absolute;left:102px;top:9px;overflow:visible" width="28" height="16" viewBox="102 9 28 16"><path d="M114.4 10.4 L106.2 10.4 L114.4 18.6 Z" fill="#86b4e2"/><path d="M111.4 15.2 C105.6 13.8 104 21.2 109.6 23.2" fill="none" stroke="#86b4e2" stroke-width="3.1"/><path d="M121 16.1 L126.8 16.1 L123.9 19 Z" fill="#6e9fd6"/></svg>
<svg style="position:absolute;left:143px;top:11px;overflow:visible" width="10" height="10" viewBox="143 11 10 10"><rect x="144.8" y="13" width="6.5" height="1.3" fill="#fff"/><path d="M144.8 15.6 L151.3 15.6 L148.05 19.4 Z" fill="#fff"/></svg>
<div style="position:absolute;left:909px;top:12px;width:10px;height:1.2px;background:#fff;"></div>
<div style="position:absolute;left:943px;top:8px;width:11px;height:9.5px;border:1.3px solid #fff;border-top-width:2.5px;"></div>
<svg style="position:absolute;left:978px;top:7px;overflow:visible" width="14" height="12" viewBox="978 7 14 12"><path d="M979.2 8.2 L989.8 17 M989.8 8.2 L979.2 17" stroke="#fff" stroke-width="1.9"/></svg>
<div style="position:absolute;left:976.4px;top:36.35px;font-size:14px;line-height:16px;font-weight:bold;color:#fff;letter-spacing:0px;white-space:nowrap;">?</div>
<svg style="position:absolute;left:16px;top:76px;overflow:visible" width="34" height="30" viewBox="16 76 34 30"><rect x="18.6" y="78.6" width="22.6" height="24.4" rx="2" fill="#fff" stroke="#6e6e6e" stroke-width="1.2"/><rect x="22" y="83.7" width="16" height="1" fill="#808080"/><rect x="22" y="87.9" width="16" height="1" fill="#808080"/><rect x="22" y="92" width="11" height="2" fill="#2a87d2"/><rect x="35" y="92" width="13" height="12.5" fill="#fff"/><rect x="36" y="96.9" width="11" height="3" fill="#2a87d2"/><rect x="40" y="93" width="3" height="10.6" fill="#2a87d2"/></svg>
<svg style="position:absolute;left:60px;top:76px;overflow:visible" width="34" height="30" viewBox="60 76 34 30"><rect x="64.6" y="79.6" width="24" height="23.4" rx="2" fill="#fff" stroke="#6e6e6e" stroke-width="1.2"/><path d="M70.6 80 V102.6 M76.6 80 V102.6 M82.6 80 V102.6 M65 97.5 H88.2" stroke="#c8c8c8" stroke-width="0.8"/><rect x="60" y="84" width="11" height="10" fill="#fff"/><path d="M61.5 85.5 L69.5 93 M69.5 85.5 L61.5 93" stroke="#f0506a" stroke-width="2"/><rect x="72.3" y="86" width="19.7" height="5.6" rx="1.5" fill="#2a87d2"/></svg>
<svg style="position:absolute;left:124px;top:76px;overflow:visible" width="34" height="32" viewBox="124 76 34 32"><rect x="126.8" y="78.8" width="23.4" height="24.4" rx="2" fill="#fff" stroke="#6e6e6e" stroke-width="1.2"/><text x="129.5" y="89.3" font-family="Liberation Sans" font-size="9.6" fill="#1f9a52" stroke="#1f9a52" stroke-width="0.35" textLength="17" lengthAdjust="spacingAndGlyphs">SOR</text><path d="M130 93.2 H142 M130 96.2 H142 M130 99.2 H142" stroke="#b8b8b8" stroke-width="0.6" stroke-dasharray="1 0.6"/><rect x="146" y="89" width="6" height="11" fill="#fff"/><rect x="147.2" y="90" width="3.8" height="1.4" fill="#2a87d2"/><rect x="147.2" y="92.4" width="3.8" height="7.8" fill="#2a87d2"/><path d="M143.5 100 L155 100 L149.2 105.5 Z" fill="#2a87d2"/></svg>
<svg style="position:absolute;left:184px;top:75px;overflow:visible" width="34" height="32" viewBox="184 75 34 32"><rect x="187.1" y="77.8" width="20.8" height="22.5" fill="#fff" stroke="#7a7a7a" stroke-width="1"/><path d="M191 85.3 H204.6 M191 89.5 H204.6 M191 93.4 H201" stroke="#777" stroke-width="1.3"/><circle cx="208.6" cy="97.3" r="7.8" fill="#fff"/><circle cx="208.6" cy="97.3" r="6.3" fill="#2b98e6"/><path d="M207.8 93.8 V98.4 H211.4" fill="none" stroke="#fff" stroke-width="1.1"/></svg>
<svg style="position:absolute;left:270px;top:75px;overflow:visible" width="36" height="34" viewBox="270 75 36 34"><path d="M279.1 91.1 L296.3 91.1 L302.5 107.5 L273.4 107.5 Z" fill="#fff" stroke="#747474" stroke-width="1.1"/><path d="M283 95 H292 M282 98.3 H294 M281 101.5 H295 M280 104.6 H296" stroke="#c8c8c8" stroke-width="0.7"/><path d="M288.6 77 L298.5 86.4 L291.8 86.4 C292.2 96 288 102.6 278.9 103.8 C284 100.5 286 94 285.6 86.4 L279.9 86.4 Z" fill="#2a8ad8"/></svg>
<svg style="position:absolute;left:7px;top:191px;overflow:visible" width="9" height="9" viewBox="7 191 9 9"><path d="M14.3 191.8 L14.3 198.2 L7.9 198.2 Z" fill="#3a3a3a"/></svg>
<svg style="position:absolute;left:17px;top:212px;overflow:visible" width="9" height="9" viewBox="17 212 9 9"><path d="M24.4 213.6 L24.4 219.6 L18.4 219.6 Z" fill="#3a3a3a"/></svg>
<svg style="position:absolute;left:156px;top:167px;overflow:visible" width="10" height="11" viewBox="156 167 10 11"><rect x="158.6" y="168.6" width="3.8" height="4.9" fill="#fff" stroke="#333" stroke-width="1.2"/><rect x="160.6" y="168.6" width="1.8" height="4.9" fill="#333"/><rect x="157" y="173" width="7" height="1.3" fill="#333"/><rect x="160" y="174" width="1.2" height="3" fill="#333"/></svg>
<svg style="position:absolute;left:965.8px;top:429.2px;overflow:visible" width="10" height="11" viewBox="965.8 429.2 10 11"><rect x="968.4" y="430.8" width="3.8" height="4.9" fill="#fff" stroke="#333" stroke-width="1.2"/><rect x="970.4" y="430.8" width="1.8" height="4.9" fill="#333"/><rect x="966.8" y="435.2" width="7" height="1.3" fill="#333"/><rect x="969.8" y="436.2" width="1.2" height="3" fill="#333"/></svg>
<svg style="position:absolute;left:986px;top:429px;overflow:visible" width="12" height="11" viewBox="986 429 12 11"><path d="M988.3 431.3 L995.7 437.7 M995.7 431.3 L988.3 437.7" stroke="#333" stroke-width="1.3"/></svg>
<div style="position:absolute;left:0px;top:780px;width:1005px;height:22px;background:#0b68b6;"></div>
<div style="position:absolute;left:0px;top:802px;width:1005px;height:3px;background:#2d559c;"></div>
<div style="position:absolute;left:0px;top:805px;width:1008px;height:1px;background:#1ea2f0;"></div>
<div style="position:absolute;left:4.7px;top:785.59px;font-size:11px;line-height:13px;font-weight:normal;color:#fff;letter-spacing:-0.05px;white-space:nowrap;">huzb@glodon.com connected</div>
<div style="position:absolute;left:818px;top:790px;width:9px;height:2.2px;background:#fff;"></div>
<div style="position:absolute;left:836px;top:790px;width:99px;height:2px;background:#0b3f7a;"></div>
<div style="position:absolute;left:881px;top:787px;width:8px;height:8px;border-radius:50%;background:#fff;"></div>
<div style="position:absolute;left:944px;top:790px;width:11px;height:2px;background:#fff;"></div>
<div style="position:absolute;left:948.5px;top:785.5px;width:2px;height:11px;background:#fff;"></div>
<div style="position:absolute;left:970px;top:786.36px;font-size:10.5px;line-height:12px;font-weight:normal;color:#fff;letter-spacing:-0.2px;white-space:nowrap;">100%</div>
<div style="position:absolute;left:1002px;top:786.36px;font-size:10.5px;line-height:12px;font-weight:normal;color:#fff;letter-spacing:0px;white-space:nowrap;">(</div>
</body></html>
